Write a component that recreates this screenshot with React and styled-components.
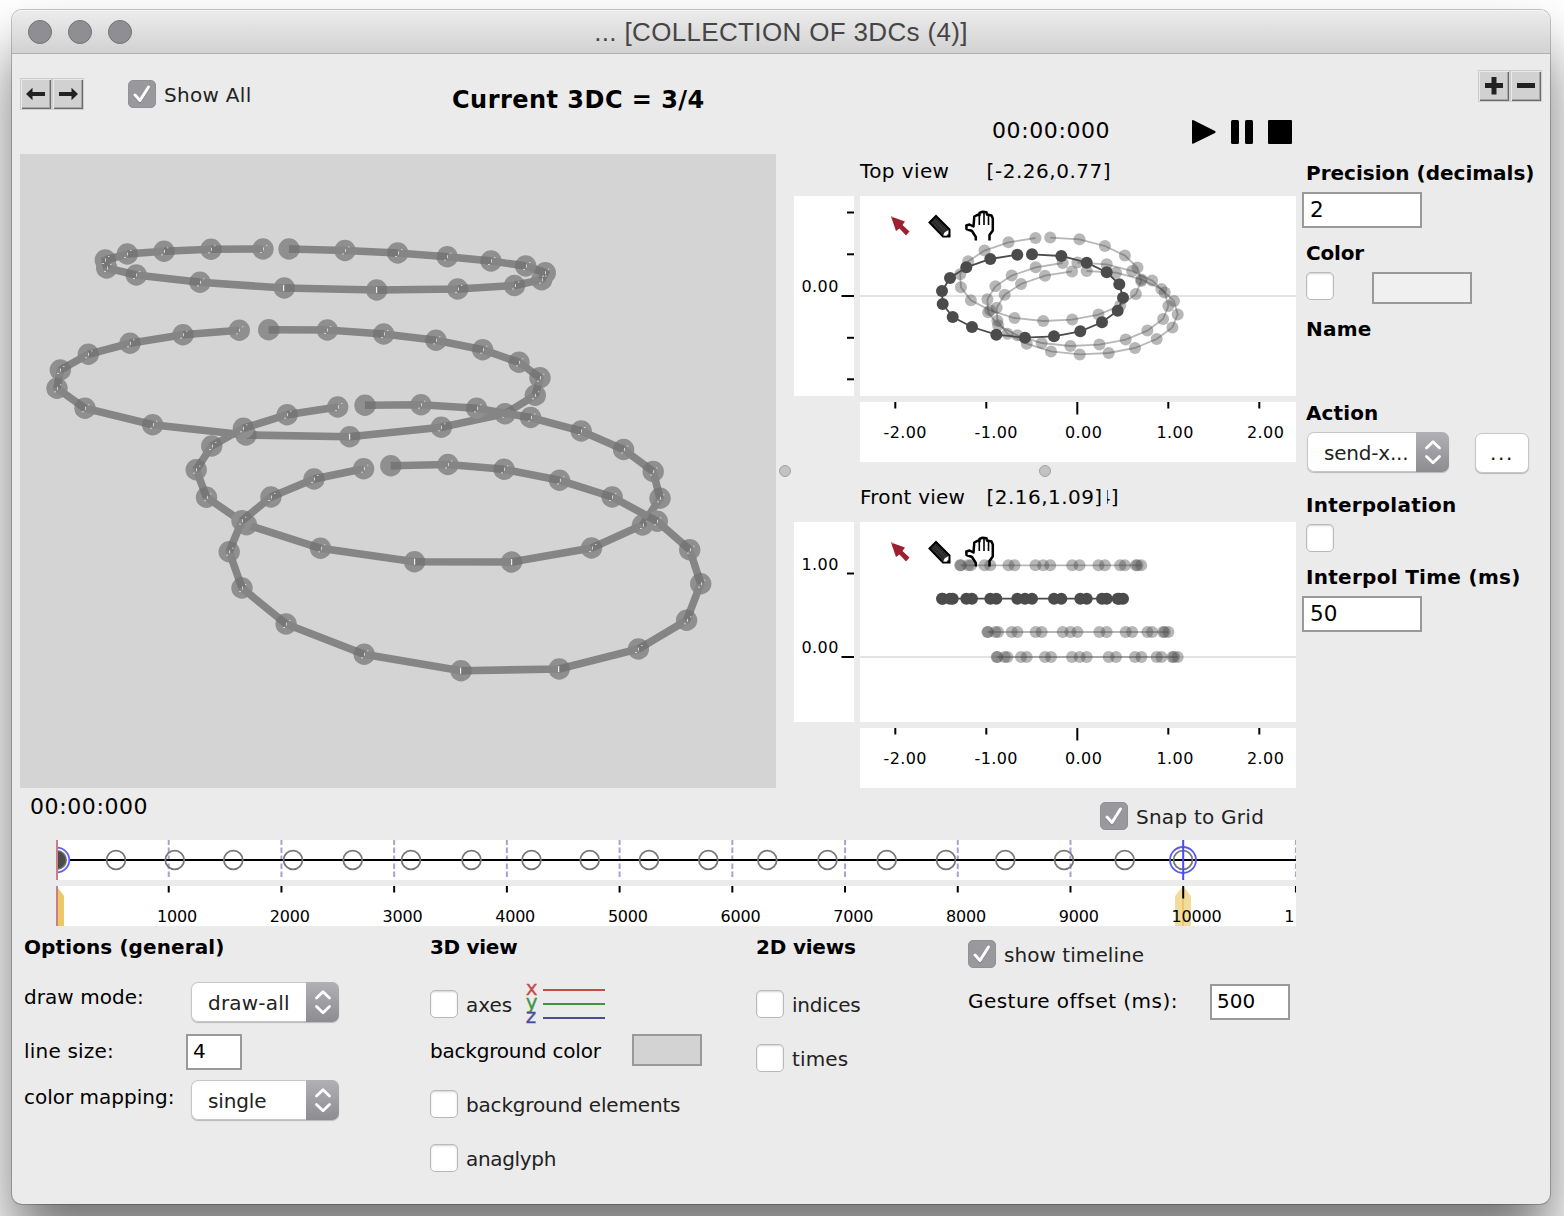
import React from "react";
import styled, { createGlobalStyle } from "styled-components";

const GlobalStyle = createGlobalStyle`
  html, body { margin: 0; padding: 0; background: #fff; }
  * { box-sizing: border-box; }
  body { font-family: "DejaVu Sans", Verdana, sans-serif; font-size: 20px; color: #000; }
`;

const Page = styled.div`
  height: 1216px;
  padding: 10px 0 0 12px;
  overflow: hidden;
  background: #fff;
`;

const Window = styled.div`
  width: 1538px;
  height: 1194px;
  display: flex;
  flex-direction: column;
  background: #ebebeb;
  border-radius: 10px;
  box-shadow: 0 0 0 1px rgba(0, 0, 0, 0.22), 0 40px 60px rgba(0, 0, 0, 0.55);
`;

const TitleBar = styled.header`
  height: 44px;
  padding: 0 16px;
  display: grid;
  grid-template-columns: 104px 1fr 104px;
  align-items: center;
  border-bottom: 1px solid #b0b0b0;
  border-radius: 10px 10px 0 0;
  background: linear-gradient(#ececec, #d2d2d2);
  box-shadow: inset 0 1px 0 #f6f6f6;
`;

const Lights = styled.div`
  display: flex;
  gap: 16px;
`;

const Light = styled.span`
  width: 24px;
  height: 24px;
  border-radius: 50%;
  border: 1px solid #747477;
  background: #8f8e93;
`;

const WindowTitle = styled.h1`
  margin: 0;
  padding-top: 2px;
  text-align: center;
  font: 400 26px/41px "Liberation Sans", Arial, sans-serif;
  letter-spacing: 0.34px;
  color: #454545;
`;

const Body = styled.div`
  flex: 1;
  display: flex;
`;

const Main = styled.main`
  width: 1284px;
  display: flex;
  flex-direction: column;
`;

const Upper = styled.div`
  display: flex;
  height: 734px;
`;

const SceneColumn = styled.section`
  width: 764px;
  padding-left: 8px;
`;

const SceneHeader = styled.div`
  height: 100px;
  padding-top: 24px;
  display: flex;
  align-items: flex-start;
`;

const ButtonPair = styled.div`
  display: flex;
  background: #d0d0d0;
`;

const BevelButton = styled.button`
  width: 32px;
  height: 32px;
  padding: 0;
  display: grid;
  place-items: center;
  border: 1px solid #cdcdcd;
  background: #d1d1d1;
  box-shadow: inset 1px 1px 0 #e9e9e9, inset -1px -1px 0 #6c6c6c, inset -2px -2px 0 #a6a6a6;
`;

const ShowAllSlot = styled.div`
  width: 324px;
  margin: 2px 0 0 44px;
`;

const SceneTitle = styled.h2`
  margin: 7px 0 0;
  font-size: 24px;
  line-height: 30px;
  letter-spacing: 0.47px;
  white-space: nowrap;
`;

const CheckLabel = styled.label`
  height: 28px;
  display: flex;
  align-items: center;
  gap: 8px;
  color: #222;
  letter-spacing: ${(p) => p.$spacing}px;
  white-space: nowrap;
`;

const CheckText = styled.span`
  padding-top: 2px;
  line-height: 28px;
`;

const CheckBox = styled.span`
  width: 28px;
  height: 28px;
  flex: none;
  display: grid;
  place-items: center;
  border-radius: 5px;
  border: 1px solid ${(p) => (p.$on ? "#919095" : "#b9b9b9")};
  background: ${(p) => (p.$on ? "#99989d" : "#fff")};
  box-shadow: ${(p) => (p.$on ? "none" : "inset 0 1px 2px rgba(0,0,0,.18)")};
`;

const SplitterColumn = styled.div`
  width: 18px;
  display: flex;
  justify-content: center;
  padding-top: 411px;
`;

const SplitterRow = styled.div`
  height: 18px;
  display: flex;
  justify-content: center;
  align-items: center;
`;

const SplitDot = styled.span`
  width: 12px;
  height: 12px;
  border-radius: 50%;
  border: 1px solid #a2a2a2;
  background: #c2c2c2;
`;

const ViewsColumn = styled.section`
  width: 502px;
`;

const Transport = styled.div`
  height: 100px;
  padding: 62px 4px 10px 198px;
  display: flex;
  align-items: center;
  justify-content: space-between;
`;

const Clock = styled.span`
  padding-top: 1px;
  font-size: 22px;
  line-height: 28px;
  letter-spacing: 0.6px;
  white-space: nowrap;
`;

const ViewBlock = styled.div`
  height: 308px;
  display: grid;
  grid-template-columns: 60px 436px;
  grid-template-rows: 42px 200px 66px;
  column-gap: 6px;
`;

const ViewCaption = styled.div`
  grid-column: 2;
  display: flex;
  height: 34px;
  line-height: 34px;
  white-space: pre;
`;

const ViewName = styled.span`
  width: 126.6px;
  letter-spacing: ${(p) => p.$spacing}px;
`;

const Coordinates = styled.span`
  min-width: 120px;
  letter-spacing: ${(p) => p.$spacing}px;
`;

const StaleGlyphs = styled.span`
  width: 12px;
  display: flex;
  justify-content: flex-end;
  overflow: hidden;
`;

const Surface = styled.div`
  background: #fff;
  overflow: hidden;

  svg { display: block; }
`;

const RulerSurface = styled(Surface)`
  grid-column: 2;
  height: 60px;
  margin-top: 6px;
`;

const Timeline = styled.section`
  height: 138px;
`;

const TimelineHeader = styled.div`
  height: 52px;
  padding: 4px 32px 0 18px;
  display: flex;
  justify-content: space-between;
`;

const SnapSlot = styled.div`
  width: 164px;
  padding-top: 10px;
`;

const Track = styled.div`
  height: 40px;
  margin: 0 0 6px 44px;
  background: #fff;

  svg { display: block; }
`;

const Options = styled.section`
  flex: 1;
  padding: 9px 0 0 12px;
  display: grid;
  grid-template-columns: 406px 326px 212px 1fr;
  align-items: start;
`;

const Heading = styled.h3`
  margin: 0 0 ${(p) => p.$gap}px;
  font-size: 20px;
  line-height: 24px;
  letter-spacing: ${(p) => p.$spacing || 0}px;
  white-space: nowrap;
`;

const Row = styled.div`
  height: ${(p) => p.$h}px;
  margin-bottom: ${(p) => p.$gap || 0}px;
  display: flex;
  align-items: flex-start;
`;

const TimelineOptions = styled.div`
  padding-top: 5px;
`;

const Caption = styled.span`
  width: ${(p) => p.$w}px;
  flex: none;
  line-height: ${(p) => p.$lh}px;
  letter-spacing: ${(p) => p.$spacing || 0}px;
  white-space: nowrap;
`;

const NumberInput = styled.input`
  display: block;
  width: ${(p) => p.$w}px;
  height: 36px;
  padding: 0 5px 2px ${(p) => (p.$large ? 6 : 5)}px;
  border: 2px solid #999;
  border-radius: 0;
  outline: 0;
  background: #fff;
  color: #000;
  font: ${(p) => (p.$large ? 21.5 : 20)}px "DejaVu Sans", Verdana, sans-serif;
`;

const Swatch = styled.span`
  width: ${(p) => p.$w}px;
  height: 32px;
  border: 2px solid #999;
  background: ${(p) => p.$color};
`;

const SelectBox = styled.div`
  width: ${(p) => p.$w}px;
  height: 40px;
  margin-left: 5px;
  display: flex;
  overflow: hidden;
  border-radius: 7px;
  background: #fff;
  box-shadow: inset 0 0 0 1px #c6c6c6, 0 1px 1px rgba(0, 0, 0, 0.22);
`;

const SelectValue = styled.span`
  flex: 1;
  padding-left: 17px;
  line-height: 42px;
  color: #222;
  white-space: nowrap;
  letter-spacing: ${(p) => p.$spacing || 0}px;
`;

const SelectArrows = styled.span`
  width: 33px;
  display: grid;
  place-items: center;
  background: linear-gradient(#b1b0b5, #8d8c91);
`;

const MoreButton = styled.button`
  width: 54px;
  height: 40px;
  margin: 1px 0 0 26px;
  padding: 0;
  border: 1px solid #c6c6c6;
  border-radius: 7px;
  background: #fff;
  box-shadow: 0 1px 1px rgba(0, 0, 0, 0.22);
  color: #111;
  font: 20px/36px "DejaVu Sans", Verdana, sans-serif;
  letter-spacing: 1.6px;
`;

const Side = styled.aside`
  width: 254px;
  padding-left: 6px;
`;

const SideTools = styled.div`
  height: 107px;
  padding: 16px 8px 0 0;
  display: flex;
  justify-content: flex-end;
  align-items: flex-start;
`;

const FieldBox = styled.div`
  height: ${(p) => p.$h}px;
`;

const FieldName = styled.h3`
  margin: 0 0 7px 4px;
  font-size: 20px;
  line-height: 24px;
  letter-spacing: ${(p) => p.$spacing || 0}px;
  white-space: nowrap;
`;

const FieldRow = styled.div`
  padding-left: ${(p) => p.$indent || 0}px;
  display: flex;
  gap: ${(p) => p.$gap || 0}px;
`;

const AxisKey = styled.div`
  margin: -21px 0 0 13px;

  svg { display: block; overflow: visible; }
`;

function Tick() {
  return (
    <svg width="20" height="20" viewBox="0 0 20 20" fill="none">
      <path d="M3 12.5 L8 18 L16.5 4" stroke="#77767b" strokeWidth="3" strokeLinecap="round" strokeLinejoin="round" opacity=".45" />
      <path d="M3 11 L8 16.5 L16.5 3" stroke="#fff" strokeWidth="3" strokeLinecap="round" strokeLinejoin="round" />
    </svg>
  );
}

function Check({ on, spacing = 0, children }) {
  return (
    <CheckLabel $spacing={spacing}>
      <CheckBox $on={on}>{on && <Tick />}</CheckBox>
      {children && <CheckText>{children}</CheckText>}
    </CheckLabel>
  );
}

function Select({ width, spacing, children }) {
  return (
    <SelectBox $w={width}>
      <SelectValue $spacing={spacing}>{children}</SelectValue>
      <SelectArrows>
        <svg width="18" height="26" viewBox="0 0 18 26" fill="none" stroke="#fff" strokeWidth="2.8" strokeLinecap="round" strokeLinejoin="round">
          <path d="M2.5 9 L9 2.8 L15.5 9 M2.5 17.5 L9 23.7 L15.5 17.5" />
        </svg>
      </SelectArrows>
    </SelectBox>
  );
}

function Field({ name, spacing, height, children }) {
  return (
    <FieldBox $h={height}>
      <FieldName $spacing={spacing}>{name}</FieldName>
      {children}
    </FieldBox>
  );
}

function ArrowIcon({ flip }) {
  return (
    <svg width="20" height="14" viewBox="0 0 20 14">
      <path d="M0 7 L6.5 0.8 V5 H19 V9 H6.5 V13.2 Z" fill="#222" transform={flip ? "translate(20 0) scale(-1 1)" : undefined} />
    </svg>
  );
}

function PlusMinusIcon({ plus }) {
  return (
    <svg width="18" height="18" viewBox="0 0 18 18" fill="#222">
      <rect x="0" y="6" width="18" height="5" />
      {plus && <rect x="6.5" y="-0.5" width="5" height="18" />}
    </svg>
  );
}

/* Curves of the 3D scene, in window coordinates. */
const SCENE = [
  [[289, 249], [345, 250.5], [397.7, 253], [447.3, 256.7], [491, 261], [525.7, 266], [545.3, 272.7], [541.7, 279.7], [514.5, 285.5], [457.7, 289], [376.7, 290], [284.3, 288], [200, 282.3], [136.3, 275], [106.7, 268], [105.3, 260], [127.3, 254], [164, 251.3], [211, 249.3], [263, 249]],
  [[268.7, 329.7], [327.3, 330], [383.7, 334], [436, 340.3], [482.7, 349.7], [519, 362.3], [540, 377.7], [535.3, 395.3], [505, 413.7], [441.3, 427.3], [349.7, 436.7], [246, 435], [152.7, 424.7], [85, 408.3], [57, 388.3], [60.3, 370], [88.3, 354.3], [130, 343.3], [183, 334.7], [239.3, 330.3]],
  [[365, 405.3], [421, 404.7], [476.7, 408.3], [530.6, 417.5], [581.2, 431], [623.6, 449.5], [653.2, 471.5], [660, 498.3], [642.5, 525], [591.5, 548], [511.5, 562], [414.5, 561.7], [320.5, 548.3], [246.5, 524.7], [206.5, 497.3], [196.2, 469.7], [211.7, 446], [243.4, 428.3], [287.1, 414.7], [337.7, 407]],
  [[390.8, 465.7], [447.9, 464.5], [504.1, 469.3], [559.5, 480.3], [612.2, 497], [657.3, 521.3], [689.7, 549.7], [700.7, 583.7], [686.6, 620.3], [638.4, 649], [559.2, 669], [461, 670.7], [364.2, 654.3], [286.1, 624], [242, 588], [229.2, 551.7], [242, 520.7], [270.9, 497], [314, 479], [363.6, 468.7]],
];

/* Darker overlap where a segment enters or leaves the disc of a point. */
function stub(pts, i) {
  if (i === 1 || i === 19) return null;
  const other = i === 0 || i > 11 ? pts[i + 1] : pts[i - 1];
  const [x, y] = pts[i];
  const dx = other[0] - x;
  const dy = other[1] - y;
  const len = Math.hypot(dx, dy);
  return [x, y, x + (dx / len) * 10.5, y + (dy / len) * 10.5];
}

function Glints({ x, y, index }) {
  if (index === 0) return null;
  if (index === 10 || index === 11) {
    return <rect x={Math.round(x) - 1} y={y - 3} width="1.2" height="6" fill="#ececec" />;
  }
  return (
    <g fill="#cfcfcf">
      <rect x={Math.round(x)} y={y - 1.5} width="1" height="3" />
      <rect x={Math.round(x) - 3} y={y + 3} width="2" height="1" />
      <rect x={Math.round(x) + 3} y={y - 4} width="1.5" height="1" />
    </g>
  );
}

const SceneSurface = styled(Surface)`
  background: #d4d4d4;
`;

function Scene() {
  return (
    <SceneSurface>
      <svg width="756" height="634" viewBox="20 154 756 634">
        {SCENE.map((pts, r) => (
          <g key={r}>
            {pts.map(([x, y], i) => (
              <circle key={i} cx={x} cy={y} r="10.7" fill="#8f8f8f" />
            ))}
            <polyline points={pts.map((p) => p.join(",")).join(" ")} fill="none" stroke="#858585" strokeWidth="7.6" />
            {pts.map((_, i) => {
              const s = stub(pts, i);
              return s && <line key={i} x1={s[0]} y1={s[1]} x2={s[2]} y2={s[3]} stroke="#777" strokeWidth="7.6" />;
            })}
            {pts.map(([x, y], i) => (
              <Glints key={i} x={x} y={y} index={i} />
            ))}
          </g>
        ))}
      </svg>
    </SceneSurface>
  );
}

/* One ellipse sampled at twenty points; the other curves are offset copies of it. */
const RING = [[1032, 254.3], [1061.3, 256], [1086.7, 262.7], [1106.7, 272.3], [1119.3, 284.3], [1123, 297.7], [1117.7, 310.7], [1102, 322.3], [1080.3, 331.3], [1054, 336.3], [1025, 337.7], [996.3, 334.7], [972, 327], [952.7, 317], [942.7, 304], [942, 291], [950, 278], [966.3, 267.3], [990.3, 259], [1017.3, 254.7]];
const CURVES = [
  { dx: 54.7, dy: 16.7, front: 657 },
  { dx: 45.4, dy: 8.3, front: 632 },
  { dx: 18.2, dy: -16.7, front: 565.3 },
  { dx: 0, dy: 0, front: 598.7, current: true },
];

function Curve({ pts, current }) {
  const opacity = current ? 1 : 0.4;
  return (
    <g>
      <polyline points={pts.map((p) => p.join(",")).join(" ")} fill="none" stroke="#4b4b4b" strokeWidth="1.8" strokeOpacity={opacity} />
      {pts.map(([x, y], i) => (
        <circle key={i} cx={x} cy={y} r="6" fill="#4b4b4b" fillOpacity={opacity} />
      ))}
    </g>
  );
}

function ToolIcons() {
  return (
    <g>
      <path d="M891 216.5 L905 221.5 L902.5 225 L909.5 231.5 L906 235.5 L899.5 228.5 L896 231 Z" fill="#9c2030" />
      <path d="M891 216 l2.5 1 l-1.5 1.5 Z" fill="#c98a3a" />
      <path d="M929.5 222.5 L936 216 L949.5 229.5 V236.5 H943 Z" fill="#333" stroke="#000" strokeWidth="2" />
      <path d="M933 221.5 L945 233.5 M936 219 L947.5 230.5" stroke="#111" strokeWidth="1" strokeDasharray="1.5 1" />
      <path d="M943.2 235.6 L944.5 232.5 L948.5 230 L948.3 233.5 L946.5 235.8 Z" fill="#fff" />
      <path d="M975.8 240.5 V237 L972 231 L966.5 229 L966.3 225.5 L969.5 224.5 L973.5 226.5 L974.3 216.5 L977.5 214.8 L979.5 215.2 V213 L982.5 211.7 L986.5 212.2 L987 214.5 L991.5 215.5 L992.8 218.5 V230.5 L989.5 235 V240.5" fill="none" stroke="#000" strokeWidth="2.5" strokeLinejoin="round" />
      <path d="M979.3 214.5 V225 M984 213 V225 M988.5 215 V225" stroke="#000" strokeWidth="1.6" fill="none" />
    </g>
  );
}

const X_TICKS = [
  [895.3, "-2.00", 883.5],
  [986.3, "-1.00", 974.5],
  [1077.3, "0.00", 1065],
  [1168.3, "1.00", 1156.5],
  [1259.3, "2.00", 1247],
];

const AxisText = styled.text`
  font: 16px "DejaVu Sans", Verdana, sans-serif;
  letter-spacing: ${(p) => p.$spacing ?? 0.4}px;
  fill: #000;
`;

function Ruler() {
  return (
    <RulerSurface>
      <svg width="436" height="60" viewBox="860 402 436 60">
        {X_TICKS.map(([x, label, tx]) => (
          <g key={label}>
            <line x1={x} x2={x} y1="402" y2={label === "0.00" ? 414.5 : 408.5} stroke="#000" strokeWidth="2" />
            <AxisText x={tx} y="438">{label}</AxisText>
          </g>
        ))}
      </svg>
    </RulerSurface>
  );
}

function View({ name, spacing, coordinates, coordinateSpacing, stale, front }) {
  const zero = front ? 657 : 296;
  const top = front ? 522 : 196;
  const yTicks = front ? [573.5] : [212.5, 254.3, 337.8, 379.3];
  const yLabels = front ? [["1.00", 570], ["0.00", 653]] : [["0.00", 292]];
  return (
    <ViewBlock>
      <ViewCaption>
        <ViewName $spacing={spacing}>{name}</ViewName>
        <Coordinates $spacing={coordinateSpacing}>{coordinates}</Coordinates>
        {stale && <StaleGlyphs>{stale}</StaleGlyphs>}
      </ViewCaption>
      <Surface>
        <svg width="60" height="200" viewBox={`794 ${top} 60 200`}>
          {yTicks.map((y) => (
            <line key={y} x1="847" x2="854" y1={y} y2={y} stroke="#000" strokeWidth="2" />
          ))}
          <line x1="841.5" x2="854" y1={zero} y2={zero} stroke="#000" strokeWidth="2" />
          {yLabels.map(([label, y]) => (
            <AxisText key={label} x="801.5" y={y}>{label}</AxisText>
          ))}
        </svg>
      </Surface>
      <Surface>
        <svg width="436" height="200" viewBox={`860 ${top} 436 200`}>
          <line x1="860" x2="1296" y1={zero} y2={zero} stroke="#e3e3e3" strokeWidth="2" />
          {CURVES.map((c, i) => (
            <Curve key={i} current={c.current} pts={RING.map(([x, y]) => [x + c.dx, front ? c.front : y + c.dy])} />
          ))}
          <g transform={front ? "translate(0 326)" : undefined}>
            <ToolIcons />
          </g>
        </svg>
      </Surface>
      <Ruler />
    </ViewBlock>
  );
}

const KEYS = [116, 174.7, 233.3, 293, 352.7, 411, 471.5, 531.5, 589.7, 649, 708.3, 767.3, 827.5, 886.7, 946, 1005.3, 1064, 1124.7, 1183];
const SECONDS = [1, 2, 3, 4, 5, 6, 7, 8, 9, 10, 11];
const secondX = (s) => 56 + s * 112.72;

function TimelineTracks() {
  return (
    <>
      <Track>
        <svg width="1240" height="40" viewBox="56 840 1240 40">
          {SECONDS.filter((s) => s !== 10).map((s) => (
            <line key={s} x1={secondX(s)} x2={secondX(s)} y1="840" y2="877" stroke="#a3a3d6" strokeWidth="2" strokeDasharray="5.5 2.5" strokeDashoffset="0.5" />
          ))}
          <line x1="56" x2="1296" y1="860" y2="860" stroke="#000" strokeWidth="2" />
          {KEYS.map((x) => (
            <circle key={x} cx={x} cy="860" r="9.4" fill="none" stroke="#777" strokeWidth="1.8" />
          ))}
          <circle cx="1183" cy="860" r="13" fill="none" stroke="#5a5af0" strokeWidth="1.8" />
          <line x1="1183.2" x2="1183.2" y1="840" y2="880" stroke="#4a4af0" strokeWidth="2" />
          <circle cx="57" cy="860" r="12.3" fill="#fff" stroke="#6060f5" strokeWidth="1.8" />
          <circle cx="57" cy="860" r="9.2" fill="#4b4b4b" stroke="#6f6f6f" strokeWidth="1.6" />
          <rect x="56" y="840" width="2" height="40" fill="#cc7f83" />
        </svg>
      </Track>
      <Track>
        <svg width="1240" height="40" viewBox="56 886 1240 40">
          <path d="M58 888 L64 896 V926 H58 Z" fill="#ecc868" />
          <rect x="56" y="886" width="2" height="40" fill="#cc7f83" />
          <path d="M1183 886 L1191 896 V926 H1175 V896 Z" fill="#f3db9c" />
          <rect x="1182" y="898" width="2" height="28" fill="#ecc868" />
          {SECONDS.map((s) => (
            <g key={s}>
              <line x1={secondX(s)} x2={secondX(s)} y1="886" y2={s === 10 ? 898.5 : 892.5} stroke="#000" strokeWidth="2" />
              <AxisText $spacing={-0.2} x={secondX(s) - 11.7} y="922">{s === 11 ? "1" : s * 1000}</AxisText>
            </g>
          ))}
        </svg>
      </Track>
    </>
  );
}

const KeyText = styled.text`
  font: 20px "DejaVu Sans", Verdana, sans-serif;
`;

function AxisLegend() {
  return (
    <AxisKey>
      <svg width="82" height="60" viewBox="0 0 82 60">
        {[["x", "#c94848", 26], ["y", "#429343", 40], ["z", "#4b4b9b", 54]].map(([axis, color, y]) => (
          <g key={axis}>
            <KeyText x="0.7" y={y - 0.5} fill={color} stroke={color} strokeWidth="0.3">{axis}</KeyText>
            <line x1="18" x2="80" y1={y - 5} y2={y - 5} stroke={color} strokeWidth="2" />
          </g>
        ))}
      </svg>
    </AxisKey>
  );
}

export default function App() {
  return (
    <Page>
      <GlobalStyle />
      <Window>
        <TitleBar>
          <Lights><Light /><Light /><Light /></Lights>
          <WindowTitle>... [COLLECTION OF 3DCs (4)]</WindowTitle>
        </TitleBar>
        <Body>
          <Main>
            <Upper>
              <SceneColumn>
                <SceneHeader>
                  <ButtonPair>
                    <BevelButton><ArrowIcon /></BevelButton>
                    <BevelButton><ArrowIcon flip /></BevelButton>
                  </ButtonPair>
                  <ShowAllSlot><Check on spacing={0.3}>Show All</Check></ShowAllSlot>
                  <SceneTitle>Current 3DC = 3/4</SceneTitle>
                </SceneHeader>
                <Scene />
              </SceneColumn>
              <SplitterColumn><SplitDot /></SplitterColumn>
              <ViewsColumn>
                <Transport>
                  <Clock>00:00:000</Clock>
                  <svg width="102" height="28" viewBox="0 0 102 28">
                    <path d="M2 5 Q2 3.5 3.6 4.3 L25 15 Q26.5 16 25 17 L3.6 27.6 Q2 28 2 27 Z" fill="#000" />
                    <rect x="41" y="4" width="8" height="24" rx="1.5" />
                    <rect x="55" y="4" width="8" height="24" rx="1.5" />
                    <rect x="78" y="4" width="24" height="24" rx="1" />
                  </svg>
                </Transport>
                <View name="Top view" spacing={0.4} coordinates="[-2.26,0.77]" coordinateSpacing={0.53} />
                <SplitterRow><SplitDot /></SplitterRow>
                <View name="Front view" spacing={0.2} coordinates="[2.16,1.09]" coordinateSpacing={0.45} stale="4]" front />
              </ViewsColumn>
            </Upper>
            <Timeline>
              <TimelineHeader>
                <Clock>00:00:000</Clock>
                <SnapSlot><Check on spacing={0.25}>Snap to Grid</Check></SnapSlot>
              </TimelineHeader>
              <TimelineTracks />
            </Timeline>
            <Options>
              <div>
                <Heading $gap={23} $spacing={0.1}>Options (general)</Heading>
                <Row $h={40} $gap={12}>
                  <Caption $w={162} $lh={30} $spacing={0.05}>draw mode:</Caption>
                  <Select width={148} spacing={0.2}>draw-all</Select>
                </Row>
                <Row $h={36} $gap={10}>
                  <Caption $w={162} $lh={34} $spacing={0.2}>line size:</Caption>
                  <NumberInput $w={56} defaultValue="4" />
                </Row>
                <Row $h={40}>
                  <Caption $w={162} $lh={34}>color mapping:</Caption>
                  <Select width={148} spacing={-0.15}>single</Select>
                </Row>
              </div>
              <div>
                <Heading $gap={31} $spacing={-0.3}>3D view</Heading>
                <Row $h={28} $gap={16}>
                  <Check>axes</Check>
                  <AxisLegend />
                </Row>
                <Row $h={32} $gap={24}>
                  <Caption $w={202} $lh={34} $spacing={-0.2}>background color</Caption>
                  <Swatch $w={70} $color="#d3d3d3" />
                </Row>
                <Row $h={28} $gap={26}><Check spacing={-0.17}>background elements</Check></Row>
                <Row $h={28}><Check spacing={-0.32}>anaglyph</Check></Row>
              </div>
              <div>
                <Heading $gap={31} $spacing={-0.2}>2D views</Heading>
                <Row $h={28} $gap={26}><Check spacing={-0.25}>indices</Check></Row>
                <Row $h={28}><Check spacing={0.15}>times</Check></Row>
              </div>
              <TimelineOptions>
                <Row $h={28} $gap={16}><Check on spacing={0.06}>show timeline</Check></Row>
                <Row $h={36}>
                  <Caption $w={242} $lh={34} $spacing={0.46}>Gesture offset (ms):</Caption>
                  <NumberInput $w={80} defaultValue="500" />
                </Row>
              </TimelineOptions>
            </Options>
          </Main>
          <Side>
            <SideTools>
              <ButtonPair>
                <BevelButton><PlusMinusIcon plus /></BevelButton>
                <BevelButton><PlusMinusIcon /></BevelButton>
              </ButtonPair>
            </SideTools>
            <Field name="Precision (decimals)" height={80}>
              <NumberInput $large $w={120} defaultValue="2" />
            </Field>
            <Field name="Color" spacing={-0.2} height={76}>
              <FieldRow $indent={4} $gap={38}>
                <Check />
                <Swatch $w={100} $color="#f0f0f0" />
              </FieldRow>
            </Field>
            <Field name="Name" spacing={0.25} height={84} />
            <Field name="Action" spacing={0.1} height={92}>
              <FieldRow>
                <Select width={142} spacing={-0.2}>send-x...</Select>
                <MoreButton>...</MoreButton>
              </FieldRow>
            </Field>
            <Field name="Interpolation" spacing={0.23} height={72}>
              <FieldRow $indent={4}><Check /></FieldRow>
            </Field>
            <Field name="Interpol Time (ms)" spacing={0.29} height={67}>
              <NumberInput $large $w={120} defaultValue="50" />
            </Field>
          </Side>
        </Body>
      </Window>
    </Page>
  );
}
